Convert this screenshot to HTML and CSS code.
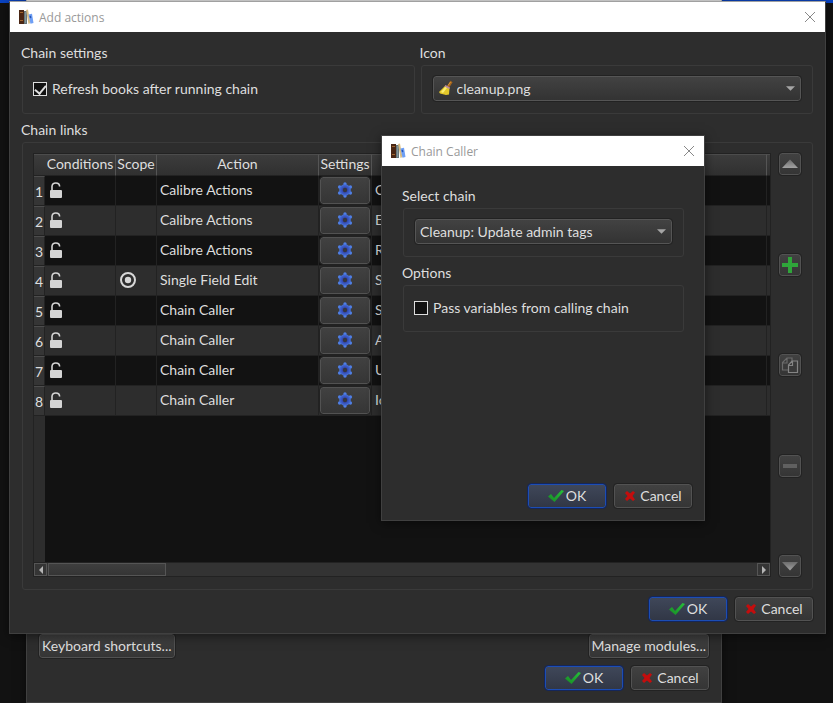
FILE: index.html
```html
<!DOCTYPE html>
<html lang="en">
<head>
    <meta charset="UTF-8">
    <meta name="viewport" content="width=device-width, initial-scale=1.0">
    <title>Add actions</title>
    <link rel="stylesheet" href="styles.css">
</head>
<body>
    <svg class="sprite" aria-hidden="true">
        <defs>
            <linearGradient id="arrowFill" x1="0" y1="0" x2="0" y2="1">
                <stop offset="0" stop-color="#6c6c6c"/>
                <stop offset="1" stop-color="#a2a2a2"/>
            </linearGradient>
            <linearGradient id="checkFill" x1="0" y1="1" x2="1" y2="0">
                <stop offset="0" stop-color="#178a24"/>
                <stop offset="1" stop-color="#27c23a"/>
            </linearGradient>
            <radialGradient id="gearFill">
                <stop offset="0.3" stop-color="#2f3fa6"/>
                <stop offset="1" stop-color="#4672da"/>
            </radialGradient>
        </defs>
        <symbol id="books" viewBox="0 0 16 16">
            <path d="M1 1h5v14H1z" fill="#4a2614"/>
            <path d="M2 3h3v1H2zM2 11h3v1H2z" fill="#a0642e"/>
            <path d="M6 2h3v13H6z" fill="#66757a"/>
            <path d="M7 3h1v11H7z" fill="#84969a"/>
            <path d="M8 1l2-.5L12.500 14l-2 1z" fill="#d9bd84"/>
            <path d="M10.500 5.500l3.500-.700L15.500 14l-3 .800z" fill="#6e9ff5"/>
            <path d="M11.500 7l1.500-.300.400 2.300-1.500.300z" fill="#2555b5"/>
        </symbol>
        <symbol id="close" viewBox="0 0 12 12">
            <path d="M1 1l10 10M11 1L1 11" fill="none" stroke="#888" stroke-width="1"/>
        </symbol>
        <symbol id="broom" viewBox="0 0 16 16">
            <path d="M13.500 1.500L10 7" stroke="#a8661c" stroke-width="2.500" fill="none"/>
            <path d="M12.500 2L10 5.500" stroke="#d99a3a" stroke-width="1" fill="none"/>
            <path d="M7.500 5.500l4 2.500L11 14.500 8 15l-6-1.500L1 12z" fill="#e3c82a"/>
            <path d="M7.500 6.500L3 12l2 1 4-5z" fill="#fbee72"/>
            <path d="M7.500 5l4.500 2.500-.500 1.500-5-2.500z" fill="#b98aa0"/>
        </symbol>
        <symbol id="lock" viewBox="0 0 14 18">
            <path d="M3 9.500V5.500C3 3.200 4.500 2 6.800 2S10.600 3.300 10.600 5.600" fill="none" stroke="#d4d4d4" stroke-width="1.600"/>
            <rect x="1" y="9" width="12" height="8" rx="1" fill="#d4d4d4"/>
        </symbol>
        <symbol id="target" viewBox="0 0 18 18">
            <circle cx="9" cy="9" r="7" fill="none" stroke="#d8d8d8" stroke-width="2"/>
            <circle cx="9" cy="9" r="3.200" fill="#d8d8d8"/>
        </symbol>
        <symbol id="gear" viewBox="0 0 16 16">
            <g fill="#4f7fe6">
                <circle cx="8" cy="2" r="1.700"/>
                <circle cx="8" cy="14" r="1.700"/>
                <circle cx="2.600" cy="5" r="1.700"/>
                <circle cx="13.400" cy="5" r="1.700"/>
                <circle cx="2.600" cy="11" r="1.700"/>
                <circle cx="13.400" cy="11" r="1.700"/>
            </g>
            <circle cx="8" cy="8" r="5.800" fill="url(#gearFill)"/>
            <circle cx="8" cy="8" r="2.200" fill="#363740"/>
        </symbol>
        <symbol id="check" viewBox="0 0 16 14">
            <path d="M0 7.500L3 5l3 4L13.500 1l2.500 1-9.500 11z" fill="url(#checkFill)"/>
        </symbol>
        <symbol id="cross" viewBox="0 0 12 12">
            <path d="M1 3l2-2 3 2.500L9 1l2 1.500L8.500 6l2.500 3.500L9 11 6 8.500 3 11 1 9l2.500-3z" fill="#c40d0d"/>
        </symbol>
        <symbol id="up" viewBox="0 0 18 18">
            <path d="M9 4.500L17 13H1z" fill="url(#arrowFill)"/>
        </symbol>
        <symbol id="down" viewBox="0 0 18 18">
            <path d="M1 5h16l-8 8.500z" fill="url(#arrowFill)"/>
        </symbol>
        <symbol id="plus" viewBox="0 0 18 18">
            <path d="M7 1h4v6h6v4h-6v6H7v-6H1V7h6z" fill="#2fa53a"/>
        </symbol>
        <symbol id="copy" viewBox="0 0 18 18">
            <path d="M6 2h5v12H1.500V6.500zM6 2v5H1.500" fill="#3a3a3a" stroke="#6b6b6b" stroke-width="1.200"/>
            <path d="M11 5h5.500v11.500h-9V9zM11.500 5v4.500h-4" fill="#3a3a3a" stroke="#858585" stroke-width="1.200"/>
        </symbol>
        <symbol id="minus" viewBox="0 0 18 18">
            <path d="M2 7h14v4H2z" fill="#606060"/>
        </symbol>
        <symbol id="caret" viewBox="0 0 8 4">
            <path d="M0 0h8L4 4z" fill="#a5a5a5"/>
        </symbol>
    </svg>

    <!-- settings window at the back -->
    <div class="window back-window">
        <div class="button-row spread">
            <button class="btn">Keyboard shortcuts...</button>
            <button class="btn">Manage modules...</button>
        </div>
        <div class="button-row">
            <button class="btn action primary"><svg class="icon-check"><use href="#check"/></svg>OK</button>
            <button class="btn action"><svg class="icon-cross"><use href="#cross"/></svg>Cancel</button>
        </div>
    </div>

    <!-- add actions -->
    <div class="window main-window">
        <div class="titlebar">
            <svg class="app-icon"><use href="#books"/></svg>
            <span>Add actions</span>
            <button class="close" aria-label="Close"><svg><use href="#close"/></svg></button>
        </div>
        <div class="window-body">
            <div class="top-groups">
                <section class="group">
                    <h2>Chain settings</h2>
                    <div class="box">
                        <label class="check"><input type="checkbox" checked>Refresh books after running chain</label>
                    </div>
                </section>
                <section class="group">
                    <h2><label for="icon">Icon</label></h2>
                    <div class="box">
                        <div class="combo with-icon">
                            <svg class="combo-icon"><use href="#broom"/></svg>
                            <select id="icon"><option>cleanup.png</option></select>
                            <svg class="caret"><use href="#caret"/></svg>
                        </div>
                    </div>
                </section>
            </div>
            <section class="group links">
                <h2>Chain links</h2>
                <div class="box">
                    <div class="table-view">
                        <div class="table-area">
                            <table>
                                <colgroup>
                                    <col class="col-num"><col class="col-cond"><col class="col-scope"><col class="col-action"><col class="col-settings"><col><col class="col-end">
                                </colgroup>
                                <thead>
                                    <tr><th></th><th>Conditions</th><th>Scope</th><th>Action</th><th>Settings</th><th></th><th></th></tr>
                                </thead>
                                <tbody>
                                    <tr><th>1</th><td><svg class="lock"><use href="#lock"/></svg></td><td></td><td>Calibre Actions</td><td><button class="btn gear" aria-label="Settings"><svg><use href="#gear"/></svg></button></td><td>C</td><td></td></tr>
                                    <tr><th>2</th><td><svg class="lock"><use href="#lock"/></svg></td><td></td><td>Calibre Actions</td><td><button class="btn gear" aria-label="Settings"><svg><use href="#gear"/></svg></button></td><td>E</td><td></td></tr>
                                    <tr><th>3</th><td><svg class="lock"><use href="#lock"/></svg></td><td></td><td>Calibre Actions</td><td><button class="btn gear" aria-label="Settings"><svg><use href="#gear"/></svg></button></td><td>R</td><td></td></tr>
                                    <tr><th>4</th><td><svg class="lock"><use href="#lock"/></svg></td><td><svg class="target"><use href="#target"/></svg></td><td>Single Field Edit</td><td><button class="btn gear" aria-label="Settings"><svg><use href="#gear"/></svg></button></td><td>S</td><td></td></tr>
                                    <tr><th>5</th><td><svg class="lock"><use href="#lock"/></svg></td><td></td><td>Chain Caller</td><td><button class="btn gear" aria-label="Settings"><svg><use href="#gear"/></svg></button></td><td>S</td><td></td></tr>
                                    <tr><th>6</th><td><svg class="lock"><use href="#lock"/></svg></td><td></td><td>Chain Caller</td><td><button class="btn gear" aria-label="Settings"><svg><use href="#gear"/></svg></button></td><td>A</td><td></td></tr>
                                    <tr><th>7</th><td><svg class="lock"><use href="#lock"/></svg></td><td></td><td>Chain Caller</td><td><button class="btn gear" aria-label="Settings"><svg><use href="#gear"/></svg></button></td><td>U</td><td></td></tr>
                                    <tr><th>8</th><td><svg class="lock"><use href="#lock"/></svg></td><td></td><td>Chain Caller</td><td><button class="btn gear" aria-label="Settings"><svg><use href="#gear"/></svg></button></td><td>Ic</td><td></td></tr>
                                </tbody>
                            </table>
                        </div>
                        <div class="scrollbar">
                            <button class="scroll-btn" aria-label="Scroll left"><svg viewBox="0 0 8 8"><path d="M6 0v8L2 4z" fill="#b5b5b5"/></svg></button>
                            <div class="thumb"></div>
                            <button class="scroll-btn end" aria-label="Scroll right"><svg viewBox="0 0 8 8"><path d="M2 0v8l4-4z" fill="#b5b5b5"/></svg></button>
                        </div>
                    </div>
                    <div class="tools">
                        <button class="btn tool" aria-label="Move up"><svg><use href="#up"/></svg></button>
                        <button class="btn tool" aria-label="Add"><svg><use href="#plus"/></svg></button>
                        <button class="btn tool" aria-label="Copy"><svg><use href="#copy"/></svg></button>
                        <button class="btn tool" aria-label="Remove"><svg><use href="#minus"/></svg></button>
                        <button class="btn tool" aria-label="Move down"><svg><use href="#down"/></svg></button>
                    </div>
                </div>
            </section>
            <div class="button-row">
                <button class="btn action primary"><svg class="icon-check"><use href="#check"/></svg>OK</button>
                <button class="btn action"><svg class="icon-cross"><use href="#cross"/></svg>Cancel</button>
            </div>
        </div>
    </div>

    <!-- chain caller -->
    <div class="window chain-window">
        <div class="titlebar">
            <svg class="app-icon"><use href="#books"/></svg>
            <span>Chain Caller</span>
            <button class="close" aria-label="Close"><svg><use href="#close"/></svg></button>
        </div>
        <div class="window-body">
            <div class="chain-form">
                <section class="group">
                    <h2><label for="chain">Select chain</label></h2>
                    <div class="box">
                        <div class="combo">
                            <select id="chain"><option>Cleanup: Update admin tags</option></select>
                            <svg class="caret"><use href="#caret"/></svg>
                        </div>
                    </div>
                </section>
                <section class="group">
                    <h2>Options</h2>
                    <div class="box">
                        <label class="check"><input type="checkbox">Pass variables from calling chain</label>
                    </div>
                </section>
            </div>
            <div class="button-row">
                <button class="btn action primary"><svg class="icon-check"><use href="#check"/></svg>OK</button>
                <button class="btn action"><svg class="icon-cross"><use href="#cross"/></svg>Cancel</button>
            </div>
        </div>
    </div>
</body>
</html>
```
FILE: styles.css
```css
* {
    box-sizing: border-box;
}

body {
    margin: 0;
    height: 100vh;
    overflow: hidden;
    position: relative;
    background: linear-gradient(#0a44c4 3px, #121212 3px);
    color: #dedede;
    font-family: Lato, "Liberation Sans", sans-serif;
    font-size: 14px;
}

svg {
    display: block;
    flex: none;
}

.sprite {
    position: absolute;
    width: 0;
    height: 0;
}

button, select {
    font: inherit;
    color: inherit;
}

/* windows */
.window {
    position: absolute;
    display: flex;
    flex-direction: column;
    background: #2d2d2d;
    border: 1px solid #404040;
    box-shadow: 0 2px 10px rgba(0, 0, 0, 0.5);
}

.back-window {
    left: 26px;
    right: 111px;
    top: 0;
    bottom: 0;
    justify-content: flex-end;
    gap: 8px;
    padding: 0 12px;
    padding-bottom: 12px;
    border-top: 2px solid #e6e6e6;
}

.main-window {
    left: 9px;
    right: 7px;
    top: 1px;
    bottom: 69px;
    border-top-color: #a0a0a0;
}

.chain-window {
    left: 381px;
    top: 135px;
    width: 324px;
    height: 386px;
}

.titlebar {
    display: flex;
    align-items: center;
    flex: none;
    height: 30px;
    padding: 0 9px 0 8px;
    background: #fff;
    color: #999;
    font-family: "Open Sans", "Noto Sans", sans-serif;
    font-size: 12px;
}

.app-icon {
    width: 16px;
    height: 16px;
    margin-right: 5px;
}

.close {
    margin-left: auto;
    padding: 0;
    border: none;
    background: none;
}

.close svg {
    width: 12px;
    height: 12px;
}

.window-body {
    flex: 1;
    display: flex;
    flex-direction: column;
    padding: 11px 12px 12px;
    min-height: 0;
}

/* group boxes */
.top-groups {
    display: grid;
    grid-template-columns: 1fr 1fr;
    gap: 6px;
    margin-bottom: 6px;
}

.group {
    display: flex;
    flex-direction: column;
}

.group h2 {
    margin: 0 0 0 -1px;
    padding-bottom: 2px;
    font-size: 14px;
    font-weight: normal;
    line-height: 20px;
}

.box {
    display: flex;
    align-items: center;
    min-height: 49px;
    padding: 10px 11px 12px;
    border: 1px solid #3a3a3a;
    border-radius: 3px;
}

.check {
    display: flex;
    align-items: center;
    gap: 5px;
    margin-left: -1px;
}

.check input {
    appearance: none;
    display: flex;
    justify-content: center;
    width: 14px;
    height: 14px;
    margin: 0;
    background: #121212;
    border: 1px solid #dedede;
}

.check input:checked::after {
    content: "";
    width: 5px;
    height: 9px;
    border: solid #dedede;
    border-width: 0 2px 2px 0;
    transform: rotate(40deg);
}

.combo {
    flex: 1;
    position: relative;
}

.combo select {
    appearance: none;
    display: block;
    width: 100%;
    height: 25px;
    padding: 0 20px 0 4px;
    border: 1px solid #555;
    border-radius: 3px;
    outline: 1px solid #222;
    background: linear-gradient(#424242, #333);
}

.with-icon select {
    padding-left: 23px;
}

.combo-icon {
    position: absolute;
    left: 5px;
    top: 4px;
    width: 16px;
    height: 16px;
}

.caret {
    position: absolute;
    right: 6px;
    top: 10px;
    width: 9px;
    height: 5px;
}

/* buttons */
.btn {
    display: flex;
    align-items: center;
    justify-content: center;
    gap: 2px;
    height: 24px;
    padding: 0 2px 1px;
    border: 1px solid #525252;
    border-radius: 3px;
    outline: 1px solid #222;
    background: linear-gradient(#414141, #353535);
}

.action {
    width: 78px;
}

.primary {
    border-color: #1c4db5;
    outline-color: #14265a;
    background: linear-gradient(#3f4759, #313746);
}

.button-row {
    display: flex;
    justify-content: flex-end;
    gap: 8px;
}

.spread {
    justify-content: space-between;
}

.icon-check {
    width: 16px;
    height: 14px;
}

.icon-cross {
    width: 12px;
    height: 12px;
    margin-right: 2px;
}

/* chain links */
.links {
    flex: 1;
    min-height: 0;
    margin-bottom: 7px;
}

.links .box {
    flex: 1;
    align-items: stretch;
    gap: 8px;
    min-height: 0;
    padding-left: 10px;
}

.table-view {
    flex: 1;
    min-width: 0;
    display: flex;
    flex-direction: column;
    border: 1px solid #222;
}

.table-area {
    flex: 1;
    min-height: 0;
    overflow: hidden;
    background: linear-gradient(90deg, #2d2d2d 11px, #121212 11px);
}

table {
    width: 100%;
    table-layout: fixed;
    border-collapse: separate;
    border-spacing: 0;
}

.col-num { width: 11px; }
.col-cond { width: 71px; }
.col-scope { width: 41px; }
.col-action { width: 162px; }
.col-settings { width: 53px; }
.col-end { width: 3px; }

th, td {
    padding: 0;
    font-weight: normal;
    white-space: nowrap;
    overflow: hidden;
    border-right: 1px solid #222;
    border-bottom: 1px solid #222;
}

thead th {
    height: 22px;
    line-height: 18px;
    padding-bottom: 2px;
    background: linear-gradient(#3c3c3c, #303030);
    border-top: 1px solid #4c4c4c;
    border-right-color: #555;
}

thead th:first-child {
    border-right: none;
}

tbody th {
    background: #353535;
    border-top: 1px solid #4c4c4c;
}

td {
    height: 30px;
    padding: 0 0 2px 3px;
}

td:last-child, th:last-child {
    padding: 0;
    border-right: none;
}

tbody tr:nth-child(odd) td {
    background: #121212;
}

tbody tr:nth-child(even) td {
    background: #2d2d2d;
}

.lock {
    width: 14px;
    height: 18px;
    margin-left: 1px;
}

.target {
    width: 18px;
    height: 18px;
}

td:nth-child(5) {
    padding: 0 1px;
}

.gear {
    width: 100%;
    height: 27px;
}

.gear svg {
    width: 16px;
    height: 16px;
}

.scrollbar {
    display: flex;
    gap: 1px;
    height: 14px;
    background: #333;
    border-top: 1px solid #222;
}

.scroll-btn {
    display: flex;
    align-items: center;
    justify-content: center;
    width: 13px;
    padding: 0;
    border: 1px solid #555;
    background: #353535;
}

.scroll-btn svg {
    width: 8px;
    height: 8px;
}

.thumb {
    width: 118px;
    background: linear-gradient(#3e3e3e, #353535);
    border: 1px solid #555;
}

.end {
    margin-left: auto;
}

.tools {
    display: flex;
    flex-direction: column;
    justify-content: space-between;
}

.tool {
    width: 22px;
    height: 22px;
    padding: 0;
}

.tool svg {
    width: 18px;
    height: 18px;
}

/* chain caller */
.chain-form {
    flex: 1;
    display: flex;
    flex-direction: column;
    gap: 6px;
    padding: 9px 8px 0 9px;
}

.chain-form .box {
    min-height: 47px;
}
```
